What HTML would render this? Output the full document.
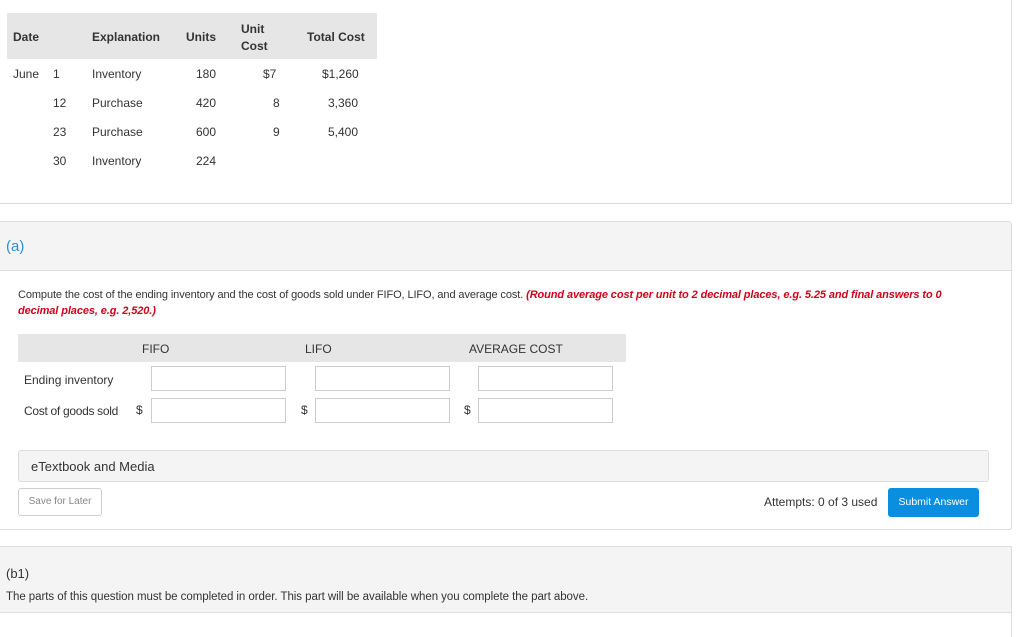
<!DOCTYPE html>
<html><head><style>
body{margin:0;width:1024px;height:627px;background:#fff;font-family:"Liberation Sans",sans-serif;color:#333;position:relative;overflow:hidden;font-size:12px}
.a{position:absolute;white-space:nowrap}
.inp{position:absolute;width:135px;height:25px;border:1px solid #ccc;background:#fff;box-sizing:border-box}
</style></head><body>
<div class="a" style="left:0;top:0;width:1011px;height:203px;border-right:1px solid #ddd;border-bottom:1px solid #ddd"></div>
<div class="a" style="left:7px;top:13px;width:370px;height:46px;background:#e6e6e6"></div>
<div class="a" style="left:13px;top:30px;font-weight:bold">Date</div>
<div class="a" style="left:92px;top:30px;font-weight:bold">Explanation</div>
<div class="a" style="left:186px;top:30px;font-weight:bold">Units</div>
<div class="a" style="left:241px;top:21px;font-weight:bold;line-height:17px">Unit<br>Cost</div>
<div class="a" style="left:307px;top:30px;font-weight:bold">Total Cost</div>
<div class="a" style="left:13px;top:67px">June</div>
<div class="a" style="left:53px;top:67px">1</div>
<div class="a" style="left:53px;top:96px">12</div>
<div class="a" style="left:53px;top:125px">23</div>
<div class="a" style="left:53px;top:154px">30</div>
<div class="a" style="left:92px;top:67px">Inventory</div>
<div class="a" style="left:92px;top:96px">Purchase</div>
<div class="a" style="left:92px;top:125px">Purchase</div>
<div class="a" style="left:92px;top:154px">Inventory</div>
<div class="a" style="left:196px;top:67px">180</div>
<div class="a" style="left:196px;top:96px">420</div>
<div class="a" style="left:196px;top:125px">600</div>
<div class="a" style="left:196px;top:154px">224</div>
<div class="a" style="left:263px;top:67px">$7</div>
<div class="a" style="left:273px;top:96px">8</div>
<div class="a" style="left:273px;top:125px">9</div>
<div class="a" style="left:322px;top:67px">$1,260</div>
<div class="a" style="left:328px;top:96px">3,360</div>
<div class="a" style="left:328px;top:125px">5,400</div>

<div class="a" style="left:0;top:221px;width:1011px;height:307px;border:1px solid #ddd;border-left:none;border-radius:0 3px 3px 0"></div>
<div class="a" style="left:0;top:222px;width:1011px;height:48px;background:#f4f4f4;border-bottom:1px solid #ddd"></div>
<div class="a" style="left:6px;top:238px;color:#2b8fd6;font-size:15px">(a)</div>
<div class="a" style="left:18px;top:287px;font-size:11px;letter-spacing:-0.1px;line-height:16px;white-space:normal;width:955px">Compute the cost of the ending inventory and the cost of goods sold under FIFO, LIFO, and average cost. <b style="color:#d0021b;font-style:italic">(Round average cost per unit to 2 decimal places, e.g. 5.25 and final answers to 0 decimal places, e.g. 2,520.)</b></div>
<div class="a" style="left:18px;top:334px;width:608px;height:28px;background:#e6e6e6"></div>
<div class="a" style="left:142px;top:342px">FIFO</div>
<div class="a" style="left:305px;top:342px">LIFO</div>
<div class="a" style="left:469px;top:342px">AVERAGE COST</div>
<div class="a" style="left:24px;top:373px">Ending inventory</div>
<div class="a" style="left:24px;top:404px;letter-spacing:-0.3px">Cost of goods sold</div>
<div class="a" style="left:136px;top:403px">$</div>
<div class="a" style="left:301px;top:403px">$</div>
<div class="a" style="left:464px;top:403px">$</div>
<div class="inp" style="left:151px;top:366px"></div>
<div class="inp" style="left:315px;top:366px"></div>
<div class="inp" style="left:478px;top:366px"></div>
<div class="inp" style="left:151px;top:398px"></div>
<div class="inp" style="left:315px;top:398px"></div>
<div class="inp" style="left:478px;top:398px"></div>
<div class="a" style="left:18px;top:450px;width:969px;height:30px;background:#f4f4f4;border:1px solid #ddd;border-radius:3px"></div>
<div class="a" style="left:31px;top:459px;font-size:13px">eTextbook and Media</div>
<div class="a" style="left:18px;top:488px;width:84px;height:28px;border:1px solid #ccc;border-radius:3px;box-sizing:border-box;font-size:10px;color:#888;text-align:center;line-height:26px">Save for Later</div>
<div class="a" style="left:764px;top:495px;font-size:12px">Attempts: 0 of 3 used</div>
<div class="a" style="left:888px;top:488px;width:91px;height:29px;background:#0a8ee0;border-radius:3px;color:#fff;font-size:10.5px;text-align:center;line-height:29px">Submit Answer</div>

<div class="a" style="left:0;top:546px;width:1011px;height:90px;border-right:1px solid #ddd;border-top:1px solid #ddd"></div>
<div class="a" style="left:0;top:547px;width:1011px;height:65px;background:#f4f4f4;border-bottom:1px solid #ddd"></div>
<div class="a" style="left:6px;top:566px;font-size:13px">(b1)</div>
<div class="a" style="left:6px;top:591px;font-size:11.5px;letter-spacing:-0.05px">The parts of this question must be completed in order. This part will be available when you complete the part above.</div>
</body></html>
